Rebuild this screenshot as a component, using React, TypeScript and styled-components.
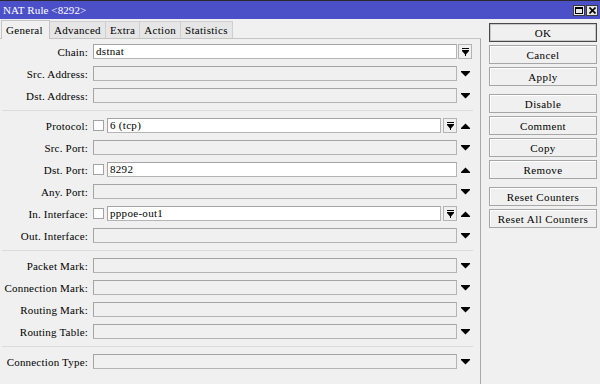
import React from 'react'
import styled, { createGlobalStyle, css } from 'styled-components'

const GlobalStyle = createGlobalStyle`
  html, body {
    margin: 0;
    padding: 0;
    background: #f0f0f0;
  }
  body {
    font-family: 'Liberation Serif', 'Times New Roman', serif;
    font-size: 11px;
    color: #000;
  }
`

const Window = styled.div`
  width: 600px;
  height: 384px;
  display: flex;
  flex-direction: column;
  background: #f0f0f0;
  overflow: hidden;
`

const TitleBar = styled.div`
  height: 18px;
  border-top: 1px solid #2a2a2a;
  background: #4b50c9;
  display: flex;
  align-items: center;
  justify-content: space-between;
  padding: 0 2px 0 3px;
  color: #fff;
  letter-spacing: 0.1px;
`

const TitleButtons = styled.div`
  display: flex;
  gap: 1px;
`

const TitleButton = styled.div`
  width: 12px;
  height: 11px;
  box-sizing: border-box;
  background: #e6e6e6;
  border: 1px solid #3a3a3a;
  display: flex;
  align-items: center;
  justify-content: center;
`

const Body = styled.div`
  flex: 1;
  display: flex;
  min-height: 0;
`

const LeftPane = styled.div`
  width: 481px;
  display: flex;
  flex-direction: column;
`

const TabStrip = styled.div`
  height: 19px;
  display: flex;
  align-items: flex-end;
  padding-left: 2px;
  border-bottom: 1px solid #c4c4c4;
`

const Tab = styled.div<{ active?: boolean }>`
  height: 17px;
  box-sizing: border-box;
  padding: 0 4px;
  display: flex;
  align-items: center;
  border: 1px solid #cfcfcf;
  border-bottom: none;
  margin-left: -1px;
  background: #e6e6e6;
  letter-spacing: 0.3px;
  ${({ active }) =>
    active &&
    css`
      height: 19px;
      margin-bottom: -1px;
      background: #f0f0f0;
      border-color: #c4c4c4;
      position: relative;
      padding: 0 6px 0 4px;
    `}
`

const Panel = styled.div`
  flex: 1;
  border-right: 1px solid #a8a8a8;
  padding-top: 5px;
`

const Row = styled.div`
  height: 15px;
  margin-bottom: 7px;
  display: flex;
  align-items: center;
  padding-right: 7px;
`

const Label = styled.div`
  width: 88px;
  margin-right: 5px;
  text-align: right;
  white-space: nowrap;
  letter-spacing: 0.2px;
`

const FieldArea = styled.div`
  flex: 1;
  display: flex;
  align-items: center;
  gap: 2px;
  height: 15px;
`

const Field = styled.div<{ filled?: boolean }>`
  flex: 1;
  height: 15px;
  box-sizing: border-box;
  border: 1px solid #b4b4b4;
  border-top-color: #a4a4a4;
  border-left-color: #a4a4a4;
  background: ${({ filled }) => (filled ? '#ffffff' : '#f0f0f0')};
  padding-left: 2px;
  line-height: 13px;
  letter-spacing: 0.3px;
  white-space: nowrap;
`

const Check = styled.div`
  width: 11px;
  height: 11px;
  box-sizing: border-box;
  border: 1px solid #a4a4a4;
  background: #fff;
  margin-right: 1px;
`

const DropButton = styled.div<{ outside?: boolean }>`
  width: 14px;
  height: 15px;
  box-sizing: border-box;
  border: 1px solid #b4b4b4;
  background: #f0f0f0;
  display: flex;
  align-items: center;
  justify-content: center;
  margin: ${({ outside }) => (outside ? '0 1px 0 1px' : '0')};
`

const ArrowSlot = styled.div`
  width: 15px;
  margin-left: 1px;
  height: 15px;
  display: flex;
  align-items: center;
  justify-content: center;
`

const Divider = styled.div`
  height: 1px;
  background: #dcdcdc;
  margin: 0 7px 7px 2px;
`

const RightPane = styled.div`
  width: 119px;
  padding: 4px 0 0 8px;
  box-sizing: border-box;
  display: flex;
  flex-direction: column;
`

const ButtonGroup = styled.div`
  display: flex;
  flex-direction: column;
  gap: 3px;
  margin-bottom: 8px;
`

const Button = styled.div<{ primary?: boolean }>`
  width: 108px;
  height: 19px;
  box-sizing: border-box;
  display: flex;
  align-items: center;
  justify-content: center;
  border: 1px solid ${({ primary }) => (primary ? '#4a4a4a' : '#a6a6a6')};
  box-shadow: ${({ primary }) =>
    primary ? 'inset 0 0 0 1px #c8c8c8' : 'inset 1px 1px 0 #ffffff'};
  background: #f0f0f0;
  letter-spacing: 0.4px;
  white-space: nowrap;
`

const DownArrow = () => (
  <svg width="9" height="6" viewBox="0 0 9 6">
    <rect x="0" y="0" width="9" height="1" fill="#000" />
    <polygon points="0,1 9,1 4.5,5.5" fill="#000" />
  </svg>
)

const UpArrow = () => (
  <svg width="9" height="6" viewBox="0 0 9 6">
    <polygon points="4.5,0.5 0,5 9,5" fill="#000" />
    <rect x="0" y="5" width="9" height="1" fill="#000" />
  </svg>
)

const DropIcon = () => (
  <svg width="7" height="8" viewBox="0 0 7 8">
    <rect x="0" y="0" width="7" height="1" fill="#000" />
    <rect x="0" y="2" width="7" height="1" fill="#000" />
    <polygon points="0,3 7,3 3.5,7" fill="#000" />
    <rect x="3" y="3" width="1" height="5" fill="#000" />
  </svg>
)

type RowProps = {
  label: string
  value?: string
  check?: boolean
  inlineDrop?: boolean
  arrow?: 'up' | 'down'
}

// plain row: label, optional checkbox, field, optional drop button and arrow
const FormRow = ({ label, value, check, inlineDrop, arrow = 'down' }: RowProps) => (
  <Row>
    <Label>{label}</Label>
    <FieldArea>
      {check && <Check />}
      <Field filled={value !== undefined}>{value}</Field>
      {inlineDrop && (
        <DropButton>
          <DropIcon />
        </DropButton>
      )}
    </FieldArea>
    <ArrowSlot>{arrow === 'up' ? <UpArrow /> : <DownArrow />}</ArrowSlot>
  </Row>
)

// chain row has its drop button where the arrow would be
const ChainRow = ({ label, value }: RowProps) => (
  <Row>
    <Label>{label}</Label>
    <FieldArea>
      <Field filled>{value}</Field>
    </FieldArea>
    <DropButton outside>
      <DropIcon />
    </DropButton>
  </Row>
)

const tabs = ['General', 'Advanced', 'Extra', 'Action', 'Statistics']

export default function App() {
  return (
    <Window>
      <GlobalStyle />
      <TitleBar>
        <span>NAT Rule &lt;8292&gt;</span>
        <TitleButtons>
          <TitleButton>
            <svg width="8" height="7" viewBox="0 0 8 7">
              <rect x="0.5" y="0.5" width="7" height="6" fill="none" stroke="#000" />
              <rect x="0" y="0" width="8" height="2" fill="#000" />
            </svg>
          </TitleButton>
          <TitleButton>
            <svg width="7" height="7" viewBox="0 0 7 7">
              <path d="M0.5 0.5 L6.5 6.5 M6.5 0.5 L0.5 6.5" stroke="#000" strokeWidth="1.6" />
            </svg>
          </TitleButton>
        </TitleButtons>
      </TitleBar>
      <Body>
        <LeftPane>
          <TabStrip>
            {tabs.map((t, i) => (
              <Tab key={t} active={i === 0}>
                {t}
              </Tab>
            ))}
          </TabStrip>
          <Panel>
            <ChainRow label="Chain:" value="dstnat" />
            <FormRow label="Src. Address:" />
            <FormRow label="Dst. Address:" />
            <Divider />
            <FormRow label="Protocol:" value="6 (tcp)" check inlineDrop arrow="up" />
            <FormRow label="Src. Port:" />
            <FormRow label="Dst. Port:" value="8292" check arrow="up" />
            <FormRow label="Any. Port:" />
            <FormRow label="In. Interface:" value="pppoe-out1" check inlineDrop arrow="up" />
            <FormRow label="Out. Interface:" />
            <Divider />
            <FormRow label="Packet Mark:" />
            <FormRow label="Connection Mark:" />
            <FormRow label="Routing Mark:" />
            <FormRow label="Routing Table:" />
            <Divider />
            <FormRow label="Connection Type:" />
          </Panel>
        </LeftPane>
        <RightPane>
          <ButtonGroup>
            <Button primary>OK</Button>
            <Button>Cancel</Button>
            <Button>Apply</Button>
          </ButtonGroup>
          <ButtonGroup>
            <Button>Disable</Button>
            <Button>Comment</Button>
            <Button>Copy</Button>
            <Button>Remove</Button>
          </ButtonGroup>
          <ButtonGroup>
            <Button>Reset Counters</Button>
            <Button>Reset All Counters</Button>
          </ButtonGroup>
        </RightPane>
      </Body>
    </Window>
  )
}
